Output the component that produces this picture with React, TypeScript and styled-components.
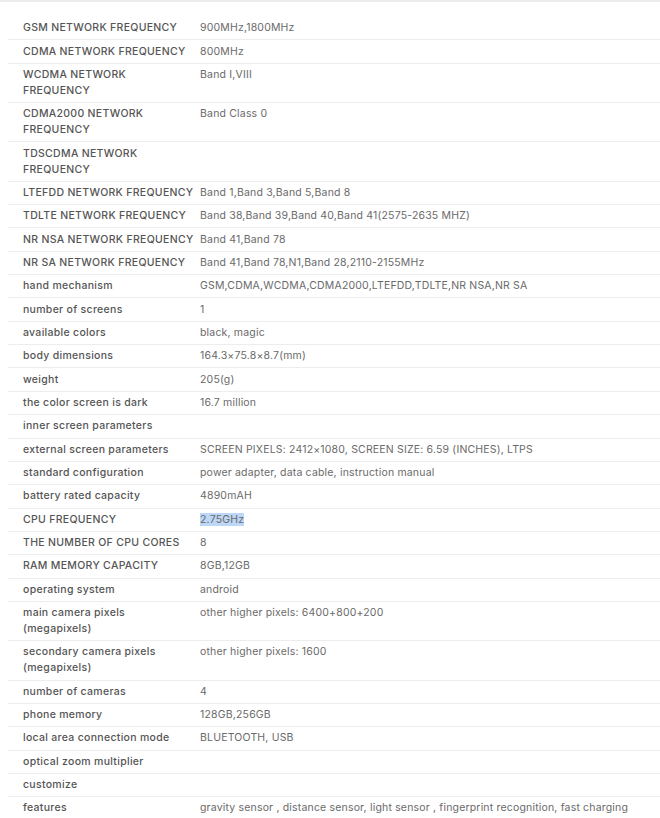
import styled, { createGlobalStyle } from 'styled-components'

const GlobalStyle = createGlobalStyle`
  body {
    margin: 0;
    background: #fff;
    font-family: Inter, "Liberation Sans", Arial, sans-serif;
  }
`

const TopRule = styled.div`
  height: 2px;
  background: #ececec;
`

const SpecTable = styled.div`
  margin: 15px 0 0 8px;
  display: flex;
  flex-direction: column;
`

const Row = styled.div`
  display: grid;
  grid-template-columns: 192px 1fr;
  border-bottom: 1px solid #ededed;
  padding: 3.18px 0;
  font-size: 10.5px;
  line-height: 16px;
`

const Label = styled.div`
  padding: 0 6px 0 15px;
  color: #555;
  font-weight: 500;
  letter-spacing: 0.3px;
`

const Value = styled.div`
  padding-right: 10px;
  color: #6a6a6a;
  font-weight: 400;
  letter-spacing: 0.18px;
  white-space: nowrap;
`

const Selected = styled.span`
  background: #bdd7f7;
`

type Spec = { label: string; value: string; selected?: boolean }

const specs: Spec[] = [
  { label: 'GSM NETWORK FREQUENCY', value: '900MHz,1800MHz' },
  { label: 'CDMA NETWORK FREQUENCY', value: '800MHz' },
  { label: 'WCDMA NETWORK FREQUENCY', value: 'Band I,VIII' },
  { label: 'CDMA2000 NETWORK FREQUENCY', value: 'Band Class 0' },
  { label: 'TDSCDMA NETWORK FREQUENCY', value: '' },
  { label: 'LTEFDD NETWORK FREQUENCY', value: 'Band 1,Band 3,Band 5,Band 8' },
  { label: 'TDLTE NETWORK FREQUENCY', value: 'Band 38,Band 39,Band 40,Band 41(2575-2635 MHZ)' },
  { label: 'NR NSA NETWORK FREQUENCY', value: 'Band 41,Band 78' },
  { label: 'NR SA NETWORK FREQUENCY', value: 'Band 41,Band 78,N1,Band 28,2110-2155MHz' },
  { label: 'hand mechanism', value: 'GSM,CDMA,WCDMA,CDMA2000,LTEFDD,TDLTE,NR NSA,NR SA' },
  { label: 'number of screens', value: '1' },
  { label: 'available colors', value: 'black, magic' },
  { label: 'body dimensions', value: '164.3×75.8×8.7(mm)' },
  { label: 'weight', value: '205(g)' },
  { label: 'the color screen is dark', value: '16.7 million' },
  { label: 'inner screen parameters', value: '' },
  { label: 'external screen parameters', value: 'SCREEN PIXELS: 2412×1080, SCREEN SIZE: 6.59 (INCHES), LTPS' },
  { label: 'standard configuration', value: 'power adapter, data cable, instruction manual' },
  { label: 'battery rated capacity', value: '4890mAH' },
  { label: 'CPU FREQUENCY', value: '2.75GHz', selected: true },
  { label: 'THE NUMBER OF CPU CORES', value: '8' },
  { label: 'RAM MEMORY CAPACITY', value: '8GB,12GB' },
  { label: 'operating system', value: 'android' },
  { label: 'main camera pixels (megapixels)', value: 'other higher pixels: 6400+800+200' },
  { label: 'secondary camera pixels (megapixels)', value: 'other higher pixels: 1600' },
  { label: 'number of cameras', value: '4' },
  { label: 'phone memory', value: '128GB,256GB' },
  { label: 'local area connection mode', value: 'BLUETOOTH, USB' },
  { label: 'optical zoom multiplier', value: '' },
  { label: 'customize', value: '' },
  { label: 'features', value: 'gravity sensor , distance sensor, light sensor , fingerprint recognition, fast charging' },
]

export default function App() {
  return (
    <>
      <GlobalStyle />
      <TopRule />
      <SpecTable>
        {specs.map((s) => (
          <Row key={s.label}>
            <Label>{s.label}</Label>
            <Value>{s.selected ? <Selected>{s.value}</Selected> : s.value}</Value>
          </Row>
        ))}
      </SpecTable>
    </>
  )
}
